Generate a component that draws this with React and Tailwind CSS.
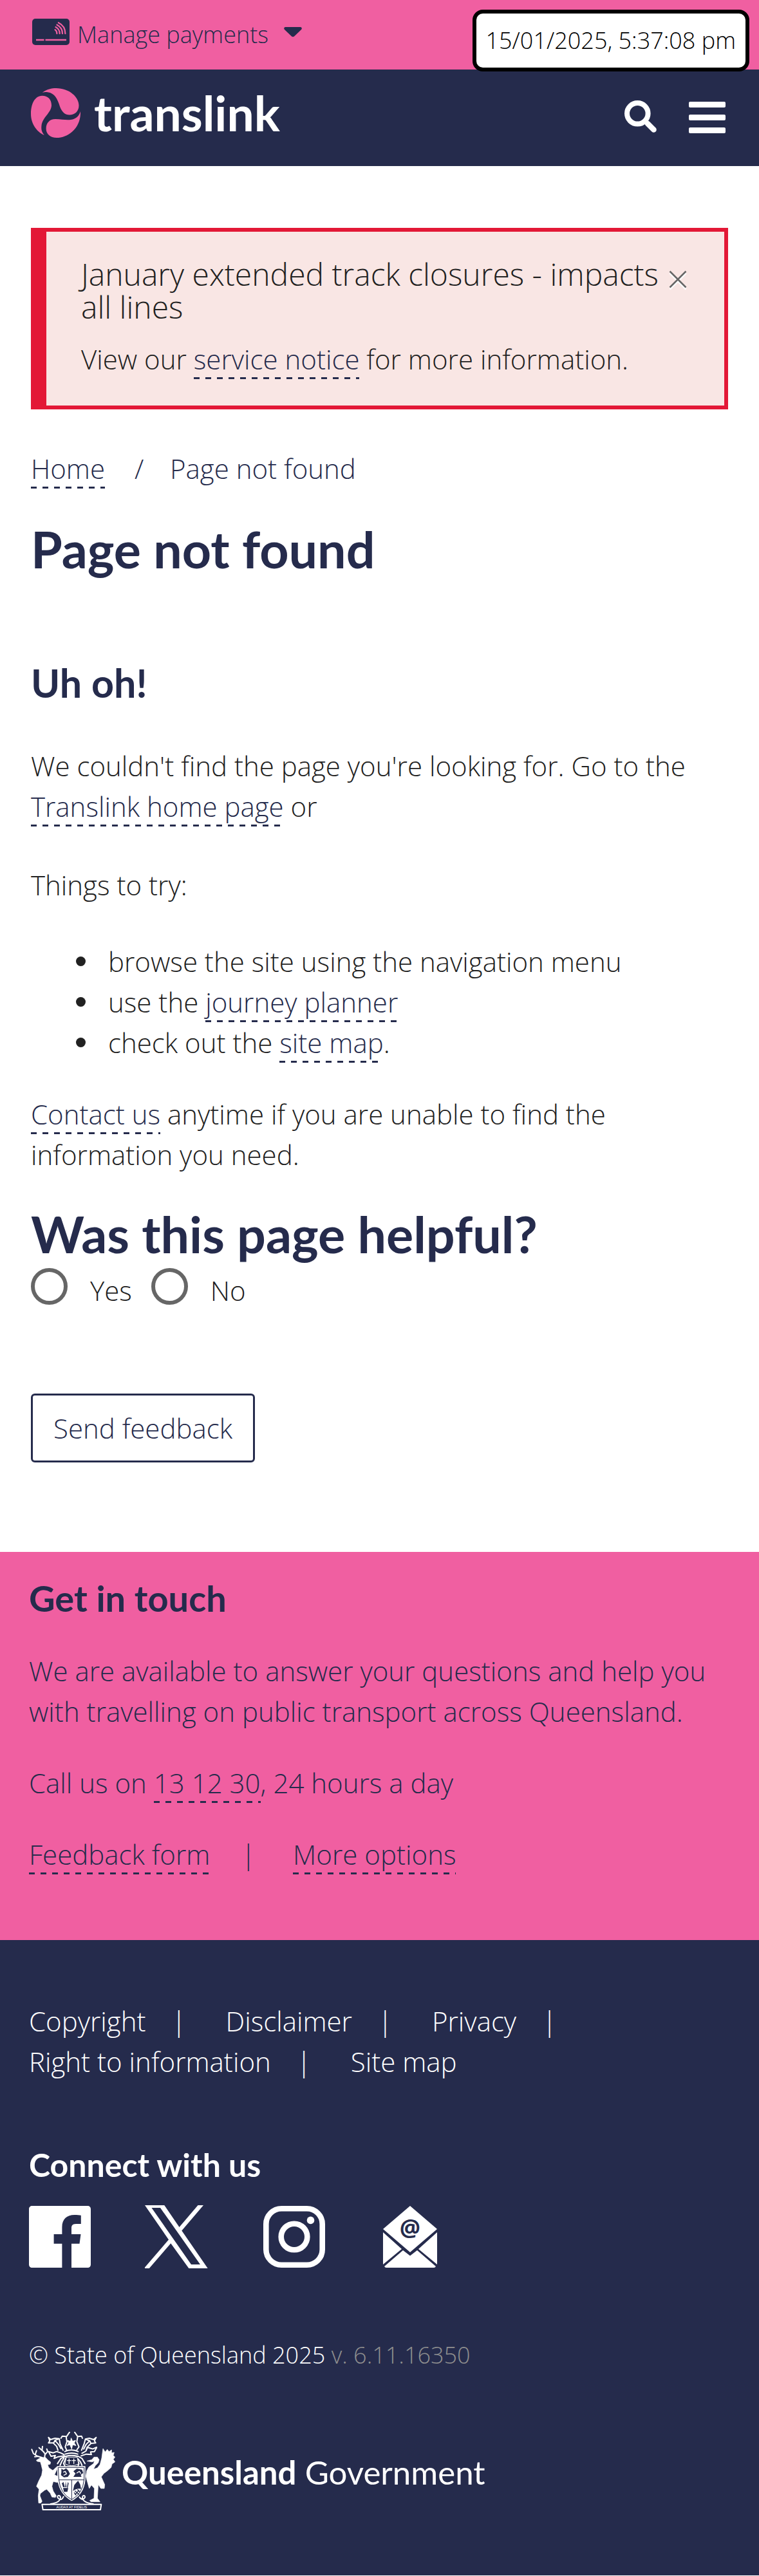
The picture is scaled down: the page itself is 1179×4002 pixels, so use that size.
const linkClass =
  "bg-[linear-gradient(to_right,#252b4c_50%,transparent_50%)] bg-[length:18px_3px] bg-[position:left_bottom] bg-repeat-x pb-[3px] text-[#252b4c]";

function Link({ children, href = "#" }) {
  return <a href={href} className={linkClass}>{children}</a>;
}

function PaymentCardIcon() {
  return (
    <svg className="h-[41px] w-[58px]" viewBox="0 0 58 41" fill="none" aria-hidden="true">
      <rect width="58" height="41" rx="5" fill="#252b4c" />
      <g stroke="#f05fa1" strokeWidth="2.6">
        <path d="M6 33H18.5M20.5 33H53" />
        <g strokeWidth="2.2" strokeLinecap="round">
          <path d="M35.5 17.2C37.5 18.5 38.4 20.5 38.4 23.2" />
          <path d="M36.5 13C40.5 15 42.7 18.5 42.7 23.2" />
          <path d="M38.5 9.5C44 12.5 47 17.5 47 23.2" />
          <path d="M40.8 6.2C47.5 9.5 51.4 16 51.4 23.2" />
        </g>
      </g>
    </svg>
  );
}

function TranslinkMark() {
  return (
    <svg className="size-[77px]" viewBox="0 0 77 77" fill="#f05fa1" aria-hidden="true">
      <path d="M17.8 6.8C25 1.5 32 0 39 0C60 0 74.5 14 74.5 27C74.5 36 68 41.5 60 41.5C53 41.5 48 37 45 28.5C41.5 17 37 7.5 26 6.2C23 5.9 20 6.3 17.8 6.8Z" />
      <path d="M20.9 73C16 68 16 62 16.5 58C18 45 32 38 32 26.5C32 17 26 11.7 17.5 11.7C5 12 0 26 0 40C0 55 9 68 20.9 73Z" />
      <path d="M77 36C78 62 58 77 40 77C30 77 23.6 71 23.6 63C23.6 54 29 48 38 48C48 48 54 50 62 49C70 48 75 43 77 36Z" />
    </svg>
  );
}

function FacebookIcon() {
  return (
    <svg className="size-24" viewBox="0 0 96 96" fill="#fff" aria-hidden="true">
      <path d="M5 0H91C94 0 96 2 96 5V91C96 94 94 96 91 96H66V58.7H78.5L80.5 44H66V35C66 31 67 28 73 28H80.8V14.7C78.5 14.3 75 14 70.5 14C59 14 51.4 20.5 51.4 33V44H38.6V58.7H51.4V96H5C2 96 0 94 0 91V5C0 2 2 0 5 0Z" />
    </svg>
  );
}

function XIcon() {
  return (
    <svg className="size-[98px]" viewBox="0 0 98 98" fill="#fff" aria-hidden="true">
      <path fillRule="evenodd" d="M0 0H30.3L53.5 34L82.5 0H91L57.3 39.5L97.7 98H68.3L40.3 59.3L6.8 98H0V96.5L37 53.5ZM10.5 4L72 92H86L24 4Z" />
    </svg>
  );
}

function InstagramIcon() {
  return (
    <svg className="size-24" viewBox="0 0 96 96" fill="none" stroke="#fff" strokeWidth="8.6" aria-hidden="true">
      <rect x="4.3" y="4.3" width="87.4" height="87.4" rx="24" />
      <circle cx="48" cy="48" r="20.3" />
      <circle cx="73.5" cy="22.4" r="5.8" fill="#fff" stroke="none" />
    </svg>
  );
}

function MailIcon() {
  return (
    <svg className="h-24 w-[84px]" viewBox="0 0 84 96" fill="#fff" aria-hidden="true">
      <path d="M42 0L84 36L42 72L0 36Z" />
      <path d="M0 41L29 67L0 91Z" />
      <path d="M84 41L55 67L84 91Z" />
      <path d="M31 69L42 77.5L53 69L82 94Q81 96 79 96H5Q3 96 2 94Z" />
      <text x="42" y="47" textAnchor="middle" fontSize="36" fontWeight="700" fontFamily="Open Sans, sans-serif" fill="#252b4c">@</text>
    </svg>
  );
}

function CoatOfArms() {
  return (
    <svg className="h-[122px] w-[131px] shrink-0" viewBox="24 54 393 366" fill="none" stroke="#fff" strokeLinecap="round" strokeLinejoin="round" aria-hidden="true">
      {/* stag */}
      <path fill="#fff" strokeWidth="2" d="M50 186L70 174L92 173L104 186L116 195L114 205L102 208L108 222L126 234L146 216V228L134 254L150 262L158 274L148 290L128 286L122 308L128 330L142 352L138 360L122 358L114 340L98 322L88 326L68 342L66 352L76 378L70 386H60L58 352L62 322L50 308L60 284L74 256L78 232L72 208L68 194L54 192Z" />
      <path strokeWidth="6" d="M76 174L56 168L36 156L28 136M44 160L50 142M58 168L42 170M88 172L90 156L76 140L78 122M84 148L62 128M92 158L102 146L98 134" />
      {/* brolga */}
      <path fill="#fff" strokeWidth="2" d="M286 190L308 184L318 172L334 172L342 184L338 198L324 212L316 228L334 222L346 206L354 176L360 132L370 148L380 136L388 146L400 138V152L412 150L408 164L416 172L408 182L416 194L402 204L398 220L380 236L364 248L352 264L368 300L366 318L350 318L338 300L336 330L334 364L346 380H304L298 374L318 364L320 318L306 302L296 318L288 290L280 262L284 236L294 218L316 202L320 190L310 194Z" />
      {/* mantling and crest */}
      <g strokeWidth="6">
        <path d="M106 80L116 90L136 84L156 86L136 94L130 106L106 106L112 96ZM136 94L152 112L164 132M156 86L160 110L174 140M128 106L144 122L150 140" />
        <path d="M328 80L316 90L296 84L278 88L298 96L304 108L326 106L320 96ZM298 96L282 112L270 134M278 88L272 110L260 140M304 108L288 124L282 140" />
        <path d="M106 146L128 152L144 146L162 152L178 160M108 150L118 168L138 164L132 178L152 170L180 166M330 126L312 134L286 126L280 144L262 154M330 128L320 146L302 148L306 160L282 158L258 166" />
        <path d="M204 56L190 76L170 74L164 84M228 56L242 76L260 74L264 84M188 76L192 100L184 124L190 138M242 76L238 100L248 124L238 138" />
        <path d="M182 146Q212 132 244 146M184 158Q214 148 242 158M186 168Q212 160 242 168" />
        <path d="M184 168L164 178L148 202M178 176L168 192L160 210M188 174L176 202L182 212M244 168L262 178L276 202M244 180L256 196L262 210M238 178L248 202L244 212" />
      </g>
      <path fill="#fff" strokeWidth="3" d="M212 84L218 98L232 94L226 106L234 118L218 114L214 134L206 114L192 118L200 106L194 94L208 98Z" />
      <path fill="#252b4c" strokeWidth="3" d="M190 172H240L246 204Q214 220 184 204Z" />
      <path strokeWidth="4" d="M202 180V202M194 188H210M224 180V202M216 188H232" />
      {/* shield */}
      <path fill="#fff" stroke="#fff" strokeWidth="4" d="M148 216H276V278Q270 344 214 374Q158 344 150 278Z" />
      <g stroke="#252b4c" strokeWidth="3">
        <path d="M152 220H272V276Q266 342 214 370Q160 342 154 276Z" />
        <path d="M154 278H272M214 278V370" />
      </g>
      <g fill="#252b4c" stroke="none">
        <path d="M166 226L176 232L188 224L198 234L206 250L196 264L178 266L164 256L166 242Z" />
        <path d="M222 264L232 248L222 238L238 226L262 230L268 246L256 254L260 264H240Z" />
        <path d="M176 288L182 312H174L168 294ZM186 284L190 312H184ZM196 288L200 294L196 314H192ZM174 316H198L194 334H178Z" />
        <path d="M244 282L254 300L258 320Q238 316 220 330L226 302L236 290Z" />
      </g>
      <g strokeWidth="4">
        <path d="M176 242L184 238L190 250L178 256M238 246L250 238L256 248" />
        <path stroke="#252b4c" d="M230 330L248 346M248 328L230 346M242 324L252 334M226 338L234 348" />
      </g>
      {/* ribbon and motto */}
      <g strokeWidth="6">
        <path d="M116 390Q160 384 162 360Q160 348 150 352Q144 358 154 366Q168 376 176 356M314 390Q266 384 264 360Q266 348 274 352Q280 360 270 366Q260 372 250 358" />
        <path d="M76 392H352L348 417H80Z" />
      </g>
      <text x="214" y="411" textAnchor="middle" fontSize="16" fontFamily="Liberation Sans, sans-serif" fill="#fff" stroke="none">AUDAX AT FIDELIS</text>
    </svg>
  );
}

function Header() {
  return (
    <header>
      <div className="flex h-[108px] items-start bg-[#f05fa1] px-[50px] pt-[29px]">
        <button type="button" className="flex items-start text-4xl/[49px] font-light">
          <PaymentCardIcon />
          <span className="ml-3">Manage payments</span>
          <svg className="mt-[13px] ml-6 h-4 w-7" viewBox="0 0 28 16" fill="#252b4c" aria-hidden="true">
            <path d="M2 0H26Q29 1 27 4L16 14.5Q14 16 12 14.5L1 4Q-1 1 2 0Z" />
          </svg>
        </button>
      </div>
      <div className="flex h-[150px] items-start justify-between bg-[#252b4c] pr-[52px] pl-12 text-white">
        <a href="#" className="mt-[29px] flex">
          <TranslinkMark />
          <span className="ml-[21px] font-[Lato] text-[75px]/[77px] font-bold">translink</span>
        </a>
        <div className="mt-[46px] flex gap-[50px]">
          <button type="button" aria-label="Search">
            <svg className="size-[50px]" viewBox="0 0 50 50" fill="none" stroke="#fff" strokeWidth="8" aria-hidden="true">
              <circle cx="20.3" cy="20.3" r="16.3" />
              <path d="M36 36L45.5 45.5" strokeWidth="8.5" strokeLinecap="round" />
            </svg>
          </button>
          <button type="button" aria-label="Menu" className="mt-1 flex w-[57px] flex-col gap-[11px]">
            <span className="h-[9px] w-full rounded-xs bg-white" />
            <span className="h-[9px] w-full rounded-xs bg-white" />
            <span className="h-[9px] w-full rounded-xs bg-white" />
          </button>
        </div>
      </div>
    </header>
  );
}

function Alert() {
  return (
    <section className="flex items-start justify-between border-6 border-l-24 border-[#e31836] bg-[#f9e6e4] pt-10 pr-[58px] pb-[41px] pl-[54px] text-[#212121]">
      <div>
        <h2 className="text-5xl/[51px]">January extended track closures - impacts all lines</h2>
        <p className="mt-6">View our <Link>service notice</Link> for more information.</p>
      </div>
      <button type="button" aria-label="Close" className="mt-5 shrink-0">
        <svg className="h-8 w-7" viewBox="0 0 28 32" fill="none" strokeWidth="2.5" aria-hidden="true">
          <path d="M1.5 4.5L26.5 29.5M26.5 4.5L1.5 29.5" stroke="#fff" />
          <path d="M1.5 1.5L26.5 26.5M26.5 1.5L1.5 26.5" stroke="#666" />
        </svg>
      </button>
    </section>
  );
}

const tips = [
  <>browse the site using the navigation menu</>,
  <>use the <Link>journey planner</Link></>,
  <>check out the <Link>site map</Link>.</>,
];

function Feedback() {
  return (
    <form className="mt-[39px] text-[#212121]">
      <fieldset>
        <legend className="font-[Lato] text-[79px]/[106px] font-bold text-[#252b4c]">Was this page helpful?</legend>
        <div className="flex items-start">
          <input id="yes" name="helpful" type="radio" className="size-[57px] appearance-none rounded-full border-6 border-[#666]" />
          <label htmlFor="yes" className="mt-[3px] ml-[35px]">Yes</label>
          <input id="no" name="helpful" type="radio" className="ml-[30px] size-[57px] appearance-none rounded-full border-6 border-[#666]" />
          <label htmlFor="no" className="mt-[3px] ml-[35px]">No</label>
        </div>
      </fieldset>
      <button type="button" className="mt-[129px] rounded-md border-3 border-[#252b4c] px-8 py-[19px] text-[#252b4c]">Send feedback</button>
    </form>
  );
}

function Footer() {
  return (
    <footer>
      <section className="bg-[#f05fa1] px-[45px] pt-[39px] pb-[102px]">
        <h2 className="font-[Lato] text-[56px]/[66px] font-bold">Get in touch</h2>
        <p className="mt-12">We are available to answer your questions and help you with travelling on public transport across Queensland.</p>
        <p className="mt-12">Call us on <Link href="tel:131230">13 12 30</Link>, 24 hours a day</p>
        <p className="mt-12 flex items-start">
          <span><Link>Feedback form</Link></span>
          <span className="ml-12">|</span>
          <span className="ml-[58px]"><Link>More options</Link></span>
        </p>
      </section>
      <div className="bg-[#252b4c] px-[45px] pt-[94px] pb-[101px] text-white">
        <nav>
          <div className="flex">
            <a href="#">Copyright</a>
            <span className="ml-10 w-[84px]">|</span>
            <a href="#">Disclaimer</a>
            <span className="ml-10 w-[84px]">|</span>
            <a href="#">Privacy</a>
            <span className="ml-10">|</span>
          </div>
          <div className="flex">
            <a href="#">Right to information</a>
            <span className="ml-10 w-[84px]">|</span>
            <a href="#">Site map</a>
          </div>
        </nav>
        <h2 className="mt-24 font-[Lato] text-[50px]/[66px] font-bold">Connect with us</h2>
        <div className="mt-[30px] flex items-center">
          <a href="#" aria-label="Facebook"><FacebookIcon /></a>
          <a href="#" aria-label="X" className="ml-[84px]"><XIcon /></a>
          <a href="#" aria-label="Instagram" className="ml-[86px]"><InstagramIcon /></a>
          <a href="#" aria-label="Email newsletter" className="ml-[90px]"><MailIcon /></a>
        </div>
        <p className="mt-[108px] text-4xl/[54px]">© State of Queensland 2025 <span className="text-[#8f8f8f]">v. 6.11.16350</span></p>
        <a href="#" className="mt-[92px] ml-[3px] flex items-center">
          <CoatOfArms />
          <span className="ml-[10px] pt-1 font-[Lato] text-[51px]/[70px] font-normal"><b className="font-bold">Queensland</b> <span>Government</span></span>
        </a>
      </div>
    </footer>
  );
}

export default function App() {
  return (
    <div className="relative bg-white font-['Open_Sans',sans-serif] text-[42px]/[63px] font-light text-[#252b4c]">
      <time className="absolute top-[15px] right-[15px] rounded-2xl border-6 border-black bg-white px-[15px] py-[17px] text-4xl/[50px] text-black">15/01/2025, 5:37:08 pm</time>
      <Header />
      <main className="px-12 pt-24 pb-[139px]">
        <Alert />
        <nav className="mt-[60px] flex">
          <span><Link>Home</Link></span>
          <span className="w-[101px] pl-[46px]">/</span>
          <span>Page not found</span>
        </nav>
        <h1 className="mt-[41px] font-[Lato] text-[79px]/[106px] font-bold">Page not found</h1>
        <h2 className="mt-[117px] font-[Lato] text-[61px]/[76px] font-bold">Uh oh!</h2>
        <div className="text-[#212121]">
          <p className="mt-[59px]">We couldn't find the page you're looking for. Go to the <Link>Translink home page</Link> or</p>
          <p className="mt-[59px]">Things to try:</p>
          <ul className="mt-14 pl-[70px]">
            {tips.map((tip, i) => (
              <li key={i} className="flex items-start before:mt-6 before:mr-[35px] before:size-[15px] before:rounded-full before:bg-[#212121]">
                <span>{tip}</span>
              </li>
            ))}
          </ul>
          <p className="mt-12"><Link>Contact us</Link> anytime if you are unable to find the information you need.</p>
        </div>
        <Feedback />
      </main>
      <Footer />
    </div>
  );
}
